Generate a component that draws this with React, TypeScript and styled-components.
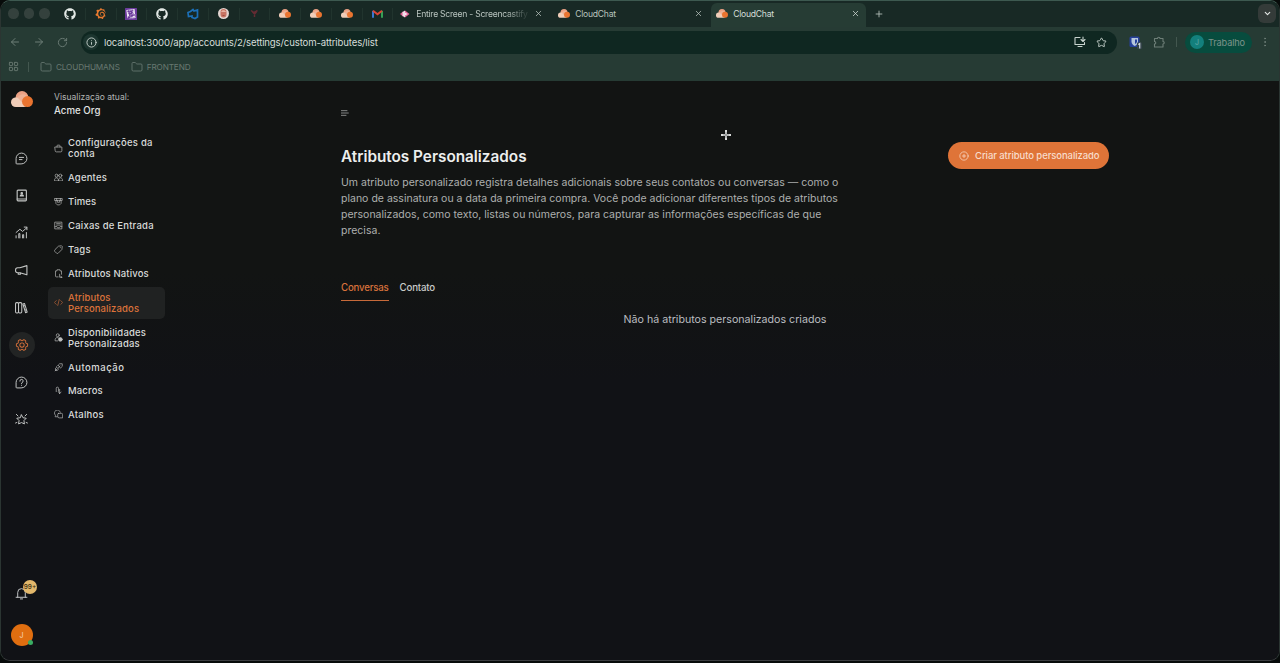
import type { ReactNode } from "react";
import styled, { createGlobalStyle, css } from "styled-components";
import {
  ArrowLeft,
  ArrowRight,
  ChevronDown,
  CirclePlus,
  EllipsisVertical,
  Folder,
  Info,
  LayoutGrid,
  Plus,
  RotateCw,
  Star,
  X,
} from "lucide-react";
import { FaGithub } from "react-icons/fa";
import { SiGrafana, SiDatadog } from "react-icons/si";
import { PiGearSix } from "react-icons/pi";

const GlobalStyle = createGlobalStyle`
  * {
    box-sizing: border-box;
  }

  body {
    margin: 0;
    background: #070b0a;
    font-family: Inter, "Liberation Sans", sans-serif;
    overflow: hidden;
  }

  svg {
    display: block;
    flex-shrink: 0;
  }
`;

const Window = styled.div`
  width: 1280px;
  height: 661px;
  display: flex;
  flex-direction: column;
  border: 1px solid #2b3532;
  border-top-color: #3d5950;
  border-bottom-color: #3b3d40;
  border-radius: 10px;
  overflow: hidden;
`;

/* Browser chrome */

const TabStrip = styled.div`
  height: 26px;
  display: flex;
  align-items: center;
  padding-bottom: 1px;
  background: #182925;
`;

const TrafficLights = styled.div`
  display: flex;
  gap: 5px;
  width: 54px;
  padding-left: 7px;
`;

const Light = styled.span`
  width: 10.5px;
  height: 10.5px;
  border-radius: 50%;
  background: #34413d;
`;

const PinnedTab = styled.div`
  width: 30.75px;
  height: 12px;
  display: flex;
  align-items: center;
  justify-content: center;
  border-right: 1px solid #21342e;
`;

const Tab = styled.div<{ $active?: boolean; $width: number }>`
  width: ${(props) => props.$width}px;
  height: 24px;
  display: flex;
  flex-shrink: 0;
  align-items: center;
  gap: 5px;
  padding: 0 8px 0 7px;
  color: #b9c4bf;
  font-size: 8.6px;
  letter-spacing: -0.26px;

  ${(props) =>
    props.$active &&
    css`
      margin-top: 3px;
      padding: 0 6px 3px 5px;
      background: #263c34;
      border-radius: 6px 6px 0 0;
      color: #d5ded9;
    `}
`;

const TabTitle = styled.span<{ $fade?: boolean }>`
  flex: 1;
  white-space: nowrap;

  ${(props) =>
    props.$fade &&
    css`
      margin-left: 1px;
      letter-spacing: -0.26px;
      mask-image: linear-gradient(to right, #000 90px, rgba(0, 0, 0, 0.2) 109px);
    `}
`;

const NewTab = styled.div`
  flex: 1;
  padding-left: 8px;
  color: #b9c4bf;
`;

const TabSearch = styled.div`
  width: 18px;
  height: 19px;
  display: grid;
  place-items: center;
  margin-right: 3px;
  border-radius: 6px;
  background: #343b39;
  color: #e4e8e6;
`;

const Toolbar = styled.div`
  height: 30px;
  display: flex;
  align-items: center;
  padding: 0 7px;
  background: #263b34;
  color: #6d7e77;

  > * {
    flex-shrink: 0;
  }
`;

const NavButtons = styled.div`
  display: flex;
  align-items: center;
  gap: 12px;
  width: 73px;
  padding-left: 1px;
`;

const AddressBar = styled.div`
  width: 1036px;
  height: 23px;
  display: flex;
  align-items: center;
  padding: 0 10px 0 2px;
  border-radius: 12px;
  background: #0f2721;
  color: #c9d4cf;
`;

const SiteInfo = styled.span`
  width: 16px;
  height: 16px;
  display: grid;
  place-items: center;
  border-radius: 50%;
  background: #1c352f;
`;

const Url = styled.span`
  flex: 1;
  margin-left: 5px;
  font-size: 9.6px;
  letter-spacing: -0.14px;
  color: #d5ddd9;
`;

const AddressActions = styled.div`
  display: flex;
  align-items: center;
  gap: 10px;
`;

const Extensions = styled.div`
  display: flex;
  align-items: center;
  gap: 11px;
  padding-left: 12px;
`;

const Divider = styled.span`
  width: 1px;
  height: 10px;
  background: #43574f;
`;

const BookmarkDivider = styled(Divider)`
  margin-left: 9px;
`;

const Profile = styled.div`
  width: 67px;
  height: 21px;
  display: flex;
  align-items: center;
  gap: 4px;
  margin: 0 7px 0 8px;
  padding-left: 5px;
  border-radius: 11px;
  background: #074c3e;
  color: #7d938b;
  font-size: 9.2px;
  letter-spacing: -0.15px;
`;

const ProfileInitial = styled.span`
  width: 14px;
  height: 14px;
  display: grid;
  place-items: center;
  border-radius: 50%;
  background: #13807d;
  color: #64a9a5;
  font-size: 7px;
`;

const Bookmarks = styled.div`
  height: 24px;
  display: flex;
  align-items: center;
  padding: 0 0 5px 7px;
  background: #263b34;
  color: #687871;
  font-size: 8.2px;
  letter-spacing: -0.14px;
`;

const Bookmark = styled.span`
  display: flex;
  align-items: center;
  gap: 4px;
  margin-left: 11px;
`;

/* Application */

const Page = styled.div`
  flex: 1;
  display: flex;
  background: linear-gradient(#121413 0, #121413 190px, #111216 300px, #111216 100%);
`;

const Rail = styled.nav`
  width: 41px;
  display: flex;
  flex-direction: column;
  align-items: center;
  padding-top: 10px;
`;

const RailItems = styled.div`
  flex: 1;
  display: flex;
  flex-direction: column;
  gap: 11.4px;
  padding-top: 37.5px;
`;

const RailButton = styled.div<{ $active?: boolean }>`
  width: 26px;
  height: 26px;
  display: grid;
  place-items: center;
  border-radius: 50%;
  color: ${(props) => (props.$active ? "#dc733b" : "#c4c6c5")};
  background: ${(props) => (props.$active ? "#222424" : "transparent")};
`;

const Bell = styled.div`
  position: relative;
  margin-bottom: 24px;
  color: #c3c5c7;
`;

const Count = styled.span`
  position: absolute;
  top: -7px;
  left: 8px;
  width: 14px;
  height: 14px;
  display: grid;
  place-items: center;
  border-radius: 50%;
  background: #e2b76b;
  color: #3b2c12;
  font-size: 6.5px;
  font-weight: 500;
`;

const Avatar = styled.div`
  position: relative;
  width: 22px;
  height: 22px;
  display: grid;
  place-items: center;
  margin-bottom: 14px;
  border-radius: 50%;
  background: #e06e10;
  color: #f3c6a3;
  font-size: 7px;
  font-weight: 500;
`;

const Online = styled.span`
  position: absolute;
  right: 0;
  bottom: 1px;
  width: 5px;
  height: 5px;
  border-radius: 50%;
  background: #39ad62;
`;

const Sidebar = styled.aside`
  width: 130px;
  padding: 10px 6px 0;
`;

const Account = styled.div`
  padding-left: 6px;
  color: #b4b6b5;
  font-size: 8.5px;
  line-height: 13px;
  letter-spacing: 0.02px;
`;

const AccountName = styled.div`
  color: #e1e3e2;
  font-size: 9.7px;
  font-weight: 500;
`;

const Menu = styled.ul`
  margin: 15px 0 0;
  padding: 0;
  list-style: none;
  display: flex;
  flex-direction: column;
  gap: 2.94px;
`;

const MenuItem = styled.li<{ $active?: boolean; $tracking: number }>`
  width: 117px;
  min-height: 21px;
  display: flex;
  align-items: center;
  gap: 5px;
  padding: 5px 6px;
  border-radius: 5px;
  background: ${(props) => (props.$active ? "#202222" : "transparent")};
  color: ${(props) => (props.$active ? "#dc733b" : "#d9dbda")};
  font-size: 9.5px;
  font-weight: 500;
  line-height: 11px;
  letter-spacing: ${(props) => props.$tracking}px;
  white-space: pre-line;

  svg {
    opacity: 0.85;
  }
`;

const Main = styled.main`
  width: 768px;
  margin-left: 169px;
  padding-top: 28px;
  color: #8d8f8e;
`;

const Header = styled.header`
  display: flex;
  justify-content: space-between;
  align-items: flex-start;
  margin-top: 29px;
`;

const Title = styled.h1`
  margin: 0;
  color: #eceeed;
  font-size: 15.3px;
  font-weight: 600;
  line-height: 21px;
`;

const Description = styled.p`
  margin: 8px 0 0;
  color: #aeb0af;
  font-size: 10.5px;
  line-height: 16px;
  letter-spacing: 0.01px;
  white-space: pre-line;
`;

const CreateButton = styled.button`
  width: 161px;
  height: 27px;
  display: flex;
  align-items: center;
  gap: 6px;
  margin-top: -4px;
  padding: 0 10px 0 11px;
  border: 0;
  border-radius: 14px;
  background: #df7438;
  color: #f8dccb;
  font: 500 9.5px Inter, sans-serif;
  letter-spacing: -0.08px;
  white-space: nowrap;
`;

const Tabs = styled.div`
  display: flex;
  gap: 11px;
  margin-top: 36px;
`;

const TabLink = styled.span<{ $active?: boolean }>`
  height: 26px;
  border-bottom: 1px solid ${(props) => (props.$active ? "#c76a3a" : "transparent")};
  color: ${(props) => (props.$active ? "#d8723c" : "#c9cbca")};
  font-size: 9.7px;
  font-weight: 500;
  line-height: 25px;
  letter-spacing: -0.2px;
`;

const Empty = styled.p`
  margin: 11px 0 0;
  color: #bbbdc0;
  font-size: 10.65px;
  line-height: 16px;
  text-align: center;
`;

const Cursor = styled.svg`
  position: absolute;
  left: 720px;
  top: 129px;
`;

type IconProps = { children: ReactNode; size?: number; stroke?: number };

const Icon = ({ children, size = 13, stroke = 1.8 }: IconProps) => (
  <svg
    width={size}
    height={size}
    viewBox="0 0 24 24"
    fill="none"
    stroke="currentColor"
    strokeWidth={stroke}
    strokeLinecap="round"
    strokeLinejoin="round"
  >
    {children}
  </svg>
);

const bubble = "M12 22a10 10 0 1 0-10-10v9a1 1 0 0 0 1 1z";

const Cloud = ({ size = 12 }: { size?: number }) => (
  <svg width={size} height={size * 0.75} viewBox="0 0 24 18">
    <circle cx="12" cy="7" r="7" fill="#eba184" />
    <rect x="0" y="7" width="19" height="10.5" rx="5.2" fill="#f0cdb8" />
    <path d="M7 7a7 7 0 0 1 12 0v5H12z" fill="#eeb195" />
    <circle cx="18" cy="11.5" r="6" fill="#e97430" />
  </svg>
);

const Azure = () => (
  <svg width="12" height="12" viewBox="0 0 24 24" fill="none" stroke="#1c70b8" strokeWidth="3.4">
    <path d="M2 9l5-2 5-4 2 3 7-2v14l-5 3-6-2v-3L3 17z" />
  </svg>
);

const Face = () => (
  <svg width="11" height="11" viewBox="0 0 22 22">
    <circle cx="11" cy="11" r="11" fill="#e3d5d1" />
    <path d="M5 8a6 6 0 0 1 12 0v5a6 6 0 0 1-12 0z" fill="#c87363" />
    <path d="M6 8c2-5 8-5 10 0" fill="#e8b2a3" />
    <path d="M9 15h4" stroke="#84392f" strokeWidth="1.3" />
  </svg>
);

const Gmail = () => (
  <svg width="11" height="9" viewBox="0 0 22 17" fill="none" strokeWidth="4">
    <path d="M2 17V3" stroke="#3977d2" />
    <path d="M20 17V3" stroke="#35a055" />
    <path d="M2 3l9 7 9-7" stroke="#d94436" />
  </svg>
);

const Screencastify = () => (
  <svg width="10" height="8" viewBox="0 0 20 16">
    <path d="M0 8l6-5v10z" fill="#d85b8c" />
    <path d="M5 4l5-3v14l-5-3z" fill="#f2dce8" />
    <path d="M10 1l9 7-9 7z" fill="#e66a9c" />
    <path d="M10 5l5 3-5 3z" fill="#f7e8f0" />
  </svg>
);

const Shield = () => (
  <svg width="13" height="13" viewBox="0 0 26 26">
    <rect x="1" y="1" width="20" height="21" rx="3" fill="#26409a" />
    <path d="M5 4h13v7c0 4-3 7-6.5 9C8 18 5 15 5 11z" fill="#b4c5dc" />
    <path d="M12 7h4v4c0 2-2 4-4 5z" fill="#26409a" />
    <rect x="16" y="13" width="10" height="13" rx="2" fill="#34434a" />
    <path d="M18.5 17l3-2v10" fill="none" stroke="#dbe3e8" strokeWidth="2.2" />
  </svg>
);

const pinned = [
  <FaGithub size={12} color="#e2e8e5" />,
  <SiGrafana size={11} color="#e7792f" />,
  <svg width="12" height="12" viewBox="0 0 24 24">
    <rect width="24" height="24" rx="1" fill="#6b3b9c" />
    <g transform="translate(2 2) scale(.84)">
      <SiDatadog size={24} color="#eee6f4" />
    </g>
  </svg>,
  <FaGithub size={12} color="#e2e8e5" />,
  <Azure />,
  <Face />,
  <svg width="9" height="9" viewBox="0 0 18 18" fill="none" stroke="#642b33" strokeWidth="3">
    <path d="M2 3l6 4 7-4M5 6l4 4 4-4M9 9v7" />
  </svg>,
  <Cloud />,
  <Cloud />,
  <Cloud />,
  <Gmail />,
];

const railIcons = [
  <Icon>
    <path d={bubble} />
    <path d="M8 10h8M8 14h5" />
  </Icon>,
  <Icon stroke={2.1}>
    <rect x="4" y="2" width="17" height="20" rx="1.5" />
    <path d="M4 18.5h17" />
    <circle cx="12.5" cy="7.8" r="1.4" fill="currentColor" />
    <path d="M9.5 13c0-3 6-3 6 0z" fill="currentColor" />
  </Icon>,
  <Icon>
    <path d="M2 22v-4M7 22v-8h2v8M14 22v-6h2v6M21 22V12M2 12l7-6 5 4 8-7M17 2h5v5" />
  </Icon>,
  <Icon stroke={2}>
    <path d="M22 3v17L9 16H5a4 4 0 0 1-4-4v-1a4 4 0 0 1 4-4h4zM6 16v3h4v-3" />
  </Icon>,
  <Icon stroke={1.9}>
    <rect x="1" y="3" width="5.5" height="19" rx="2" />
    <rect x="6.5" y="3" width="6" height="19" rx="2" />
    <path d="M14.5 5.5l3-1 5 16-3 1zM16 9l2-.5M18 17l3-.8" />
  </Icon>,
  <PiGearSix size={14} />,
  <Icon>
    <path d={bubble} />
    <path d="M9 9.5a3 3 0 1 1 4 2.6q-1 .6-1 1.900M12 17v.2" />
  </Icon>,
  <Icon stroke={1.8}>
    <path d="M12 3.500l2.700 5.200 6 1-4.200 4.300.9 6.200-5.400-2.600-5.400 2.600.9-6.200-4.200-4.300 6-1zM2.500 2.500l3 3M21.500 2.500l-3 3M1 18.500l2.500-1M23 18.500l-2.500-1" />
  </Icon>,
];

type MenuEntry = { label: string; icon: ReactNode; tracking: number; active?: boolean };

const menu: MenuEntry[] = [
  {
    label: "Configurações da\nconta",
    tracking: 0.24,
    icon: <path d="M3 8h18v10a3 3 0 0 1-3 3H6a3 3 0 0 1-3-3zM8 8V5a2 2 0 0 1 2-2h4a2 2 0 0 1 2 2v3" />,
  },
  {
    label: "Agentes",
    tracking: 0.18,
    icon: (
      <>
        <circle cx="7" cy="7" r="4" />
        <circle cx="17" cy="7" r="4" />
        <path d="M1 20c0-10 11-10 11 0zM12 20c0-10 11-10 11 0z" />
      </>
    ),
  },
  {
    label: "Times",
    tracking: 0.1,
    icon: <path d="M2 4h20v5H2zM5 9v8l4 4h6l4-4V9M9 9v5h6V9M7 4v5M17 4v5" />,
  },
  {
    label: "Caixas de Entrada",
    tracking: 0.22,
    icon: <path d="M3 3h18v18H3zM3 15h5l2 3h4l2-3h5M7 7h10M7 11h10" />,
  },
  {
    label: "Tags",
    tracking: 0.2,
    icon: <path d="M13 3l7-1 2 2-1 8-10 10a3 3 0 0 1-4 0l-5-5a3 3 0 0 1 0-4zM17 7v.1" />,
  },
  {
    label: "Atributos Nativos",
    tracking: 0.14,
    icon: <path d="M11 21H6a2 2 0 0 1-2-2V5h4V2h8v3h4v9M15 14v8h6M18 19l3 3-3 2" />,
  },
  {
    label: "Atributos\nPersonalizados",
    tracking: 0.12,
    active: true,
    icon: <path d="M6 7l-5 5 5 5M18 7l5 5-5 5M14 4l-4 16" />,
  },
  {
    label: "Disponibilidades\nPersonalizadas",
    tracking: 0.2,
    icon: (
      <>
        <circle cx="10" cy="6" r="4" />
        <path d="M10 21H3c-1-9 5-10 9-8" />
        <circle cx="17" cy="17" r="5" fill="currentColor" />
      </>
    ),
  },
  {
    label: "Automação",
    tracking: 0.5,
    icon: <path d="M3 21l5-5M8 12l4 4-3 4H4v-5zM12 12l4-4M12 5l3-3h7v7l-4 4zM7 9l2-2" />,
  },
  {
    label: "Macros",
    tracking: 0.15,
    icon: <path d="M6 15V6a3 3 0 0 1 6 0v8M15 9v11M15 20l-3-4M15 20l4-4" />,
  },
  {
    label: "Atalhos",
    tracking: 0.25,
    icon: <path d="M9 18H3l1-4a8 8 0 1 1 13-8M12 9h8a3 3 0 0 1 3 3v9h-9a4 4 0 0 1-4-4v-6a2 2 0 0 1 2-2z" />,
  },
];

const description = `Um atributo personalizado registra detalhes adicionais sobre seus contatos ou conversas — como o
plano de assinatura ou a data da primeira compra. Você pode adicionar diferentes tipos de atributos
personalizados, como texto, listas ou números, para capturar as informações específicas de que
precisa.`;

const Browser = () => (
  <>
    <TabStrip>
      <TrafficLights>
        <Light />
        <Light />
        <Light />
      </TrafficLights>
      {pinned.map((icon, i) => (
        <PinnedTab key={i}>{icon}</PinnedTab>
      ))}
      <Tab $width={158}>
        <Screencastify />
        <TabTitle $fade>Entire Screen - Screencastify</TabTitle>
        <X size={9} />
      </Tab>
      <Tab $width={160}>
        <Cloud />
        <TabTitle>CloudChat</TabTitle>
        <X size={9} />
      </Tab>
      <Tab $width={155} $active>
        <Cloud />
        <TabTitle>CloudChat</TabTitle>
        <X size={9} />
      </Tab>
      <NewTab>
        <Plus size={10} />
      </NewTab>
      <TabSearch>
        <ChevronDown size={9} strokeWidth={3} />
      </TabSearch>
    </TabStrip>
    <Toolbar>
      <NavButtons>
        <ArrowLeft size={12} />
        <ArrowRight size={12} />
        <RotateCw size={11} />
      </NavButtons>
      <AddressBar>
        <SiteInfo>
          <Info size={11} />
        </SiteInfo>
        <Url>localhost:3000/app/accounts/2/settings/custom-attributes/list</Url>
        <AddressActions>
          <Icon size={12} stroke={2.2}>
            <path d="M12 3H3a1 1 0 0 0-1 1v13h19v-4M8 21h8M18 2v8M14 7l4 4 4-4" />
          </Icon>
          <Star size={11} />
        </AddressActions>
      </AddressBar>
      <Extensions>
        <Shield />
        <Icon size={12} stroke={2.2}>
          <path d="M3 5h6a2.500 2.500 0 0 1 5 0h6v6a2.500 2.500 0 0 1 0 5v6H3v-6a2.500 2.500 0 0 0 0-5z" />
        </Icon>
        <Divider />
      </Extensions>
      <Profile>
        <ProfileInitial>J</ProfileInitial>
        Trabalho
      </Profile>
      <EllipsisVertical size={12} />
    </Toolbar>
    <Bookmarks>
      <LayoutGrid size={11} />
      <BookmarkDivider />
      <Bookmark>
        <Folder size={12} strokeWidth={1.7} />
        CLOUDHUMANS
      </Bookmark>
      <Bookmark>
        <Folder size={12} strokeWidth={1.7} />
        FRONTEND
      </Bookmark>
    </Bookmarks>
  </>
);

const App = () => (
  <>
    <GlobalStyle />
    <Window>
      <Browser />
      <Page>
        <Rail>
          <Cloud size={22} />
          <RailItems>
            {railIcons.map((icon, i) => (
              <RailButton key={i} $active={i === 5}>
                {icon}
              </RailButton>
            ))}
          </RailItems>
          <Bell>
            <Icon size={13}>
              <path d="M5 19V10a7 7 0 0 1 14 0v9M2 19h20M10 22h4" />
            </Icon>
            <Count>99+</Count>
          </Bell>
          <Avatar>
            J
            <Online />
          </Avatar>
        </Rail>
        <Sidebar>
          <Account>
            Visualização atual:
            <AccountName>Acme Org</AccountName>
          </Account>
          <Menu>
            {menu.map((item) => (
              <MenuItem key={item.label} $active={item.active} $tracking={item.tracking}>
                <Icon size={9}>{item.icon}</Icon>
                {item.label}
              </MenuItem>
            ))}
          </Menu>
        </Sidebar>
        <Main>
          <Icon size={8} stroke={2.8}>
            <path d="M1 5h17M1 12h21M1 19h14" />
          </Icon>
          <Header>
            <div>
              <Title>Atributos Personalizados</Title>
              <Description>{description}</Description>
            </div>
            <CreateButton>
              <CirclePlus size={10} strokeWidth={1.8} />
              Criar atributo personalizado
            </CreateButton>
          </Header>
          <Tabs>
            <TabLink $active>Conversas</TabLink>
            <TabLink>Contato</TabLink>
          </Tabs>
          <Empty>Não há atributos personalizados criados</Empty>
        </Main>
      </Page>
    </Window>
    <Cursor width="12" height="12" viewBox="0 0 12 12">
      <path d="M6 1v10M1 6h10" stroke="#d9dbda" strokeWidth="2" />
      <path d="M6 3v6M3 6h6" stroke="#5c5f5e" strokeWidth=".6" />
    </Cursor>
  </>
);

export default App;
